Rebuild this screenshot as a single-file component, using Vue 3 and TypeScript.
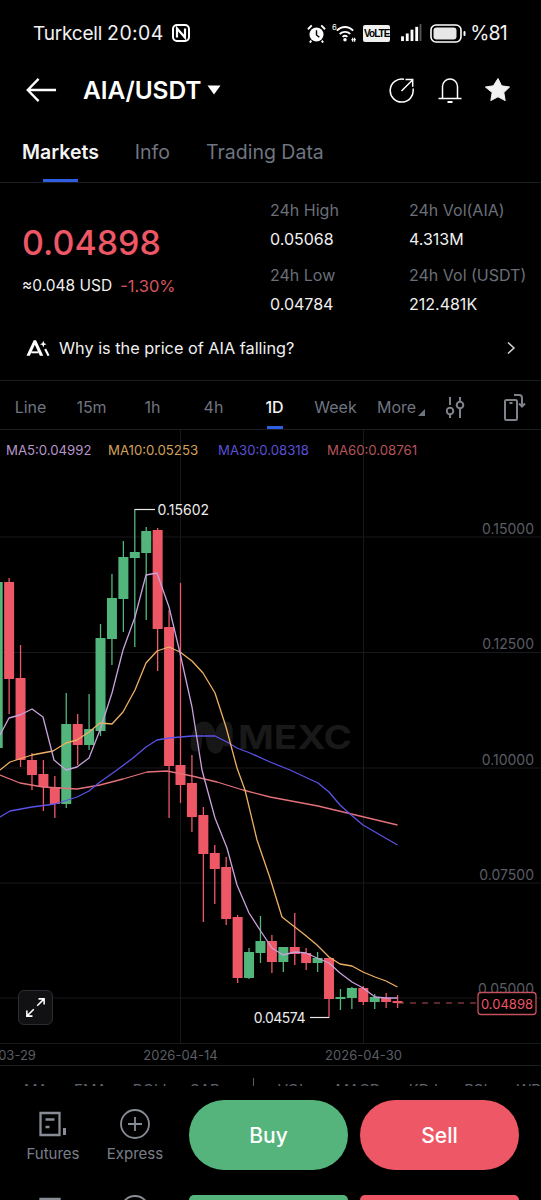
<script setup lang="ts">
// [index, colour, wick top, body top, body bottom, wick bottom]
type Candle = [number, 'g' | 'r', number, number, number, number]

const raw: Candle[] = [
  [0, 'g', 578, 582, 748, 760],
  [1, 'r', 578, 582, 679, 714],
  [2, 'r', 645, 678, 760, 767],
  [3, 'r', 753, 760, 775, 790],
  [4, 'r', 760, 774, 787, 811],
  [5, 'r', 776, 787, 804, 818],
  [6, 'g', 693, 724, 804, 808],
  [7, 'r', 714, 724, 745, 765],
  [8, 'g', 694, 729, 745, 750],
  [9, 'g', 624, 638, 731, 736],
  [10, 'g', 574, 598, 639, 665],
  [11, 'g', 541, 557, 599, 632],
  [12, 'g', 509, 552, 558, 647],
  [13, 'g', 527, 531, 553, 620],
  [14, 'r', 528, 530, 629, 671],
  [15, 'r', 610, 627, 766, 818],
  [16, 'r', 583, 765, 785, 803],
  [17, 'r', 755, 783, 817, 832],
  [18, 'r', 807, 815, 854, 922],
  [19, 'r', 845, 853, 869, 904],
  [20, 'r', 857, 867, 919, 925],
  [21, 'r', 915, 917, 978, 983],
  [22, 'g', 948, 952, 978, 979],
  [23, 'g', 916, 941, 953, 963],
  [24, 'r', 935, 941, 962, 973],
  [25, 'g', 947, 947, 962, 972],
  [26, 'r', 913, 947, 954, 965],
  [27, 'r', 948, 953, 963, 970],
  [28, 'g', 952, 958, 963, 972],
  [29, 'r', 958, 958, 999, 1018],
  [30, 'g', 989, 997, 999, 1010],
  [31, 'g', 987, 988, 998, 1009],
  [32, 'r', 986, 988, 1002, 1005],
  [33, 'g', 994, 997, 1002, 1009],
  [34, 'r', 993, 998, 1002, 1008],
  [35, 'r', 995, 1001, 1003, 1008]
]

const candles = raw.map(([i, c, wt, bt, bb, wb]) => ({
  x: -2.3 + i * 11.425,
  color: c === 'g' ? '#52b67c' : '#ee5766',
  wt,
  bt,
  bb,
  wb
}))

const ma5 =
  '0,735 9,718 20,715 32,709 43,717 54,760 66,770 77,767 89,758 100,730 112,693 123,650 135,617 146,575 157,573 169,607 180,653 192,707 202,770 215,818 227,848 237,885 249,913 260,930 272,948 283,955 295,952 306,953 317,958 329,963 340,973 352,982 363,988 375,997 386,998 397.5,998'
const ma10 =
  '0,770 10,762 32,755 53,751 66,743 77,740 89,732 100,723 112,724 123,712 135,690 146,663 157,651 169,647 180,652 192,661 203,673 215,693 226,727 237,768 245,790 257,840 270,878 282,917 305,935 317,945 329,957 340,964 352,966 363,972 375,977 386,981 397.5,987'
const ma30 =
  '0,817 10,811 32,807 55,804 77,797 89,791 100,782 117,770 133,758 146,747 157,740 169,738 192,736 215,736 227,742 237,748 250,753 270,762 290,770 318,783 329,792 340,805 350,814 363,825 397.5,845'
const ma60 =
  '0,775 20,783 43,787 77,789 100,785 123,779 147,772 167,771 192,776 217,782 243,790 270,797 318,806 397.5,825'

const lines = [
  { pts: ma60, color: '#e4717a' },
  { pts: ma30, color: '#5b52e6' },
  { pts: ma10, color: '#eeb063' },
  { pts: ma5, color: '#c8a2dc' }
]

const gridY = [537, 652.5, 768, 883, 998]
const yLabels = [
  { y: 529, t: '0.15000' },
  { y: 644, t: '0.12500' },
  { y: 760, t: '0.10000' },
  { y: 875, t: '0.07500' },
  { y: 989, t: '0.05000' }
]
const dates = [
  { x: -2, t: '2026-03-29' },
  { x: 180.5, t: '2026-04-14' },
  { x: 363.5, t: '2026-04-30' }
]

const tabs = ['Markets', 'Info', 'Trading Data']
const periods = ['Line', '15m', '1h', '4h', '1D', 'Week', 'More']
const legend = [
  { t: 'MA5:0.04992', c: '#b795c9', w: 102 },
  { t: 'MA10:0.05253', c: '#d5a05a', w: 110 },
  { t: 'MA30:0.08318', c: '#5a50d8', w: 109 },
  { t: 'MA60:0.08761', c: '#b5545a', w: 100 }
]
const stats = [
  { label: '24h High', value: '0.05068' },
  { label: '24h Vol(AIA)', value: '4.313M' },
  { label: '24h Low', value: '0.04784' },
  { label: '24h Vol (USDT)', value: '212.481K' }
]
const indicators = ['MA', 'EMA', 'BOLL', 'SAR', 'VOL', 'MACD', 'KDJ', 'RSI', 'WR']
</script>

<template>
  <div class="page">
    <div class="status">
      <div class="status-left">
        <span class="carrier">Turkcell</span>
        <span class="clock">20:04</span>
        <svg class="nfc" viewBox="0 0 18 18" fill="none" stroke="#fff">
          <rect x="1" y="1" width="16" height="16" rx="4" stroke-width="2" />
          <path d="M5 13.5V4.5l8 9V4.5" stroke-width="2.2" />
        </svg>
      </div>
      <div class="status-right">
        <svg class="alarm" viewBox="0 0 20 20">
          <circle cx="10" cy="11" r="7.4" fill="#fff" />
          <path d="M10 6.5V11.5L13 14" fill="none" stroke="#000" stroke-width="1.5" />
          <path d="M1 5.5 5 1.5M19 5.5 15 1.5M4.5 17.5 3 19.5M15.5 17.5 17 19.5" stroke="#fff" stroke-width="2" />
        </svg>
        <svg class="wifi" viewBox="0 0 26 20" fill="none" stroke="#fff" stroke-width="1.9">
          <text x="0" y="7" font-size="8" fill="#fff" stroke="none" font-family="Inter, sans-serif">6</text>
          <path d="M5 7.5c5-5 12-5 17 0M8 11c3.200-3 8-3 11 0M11 14c1.500-1.300 3.500-1.300 5 0" />
          <circle cx="13.500" cy="17" r="1.800" fill="#fff" stroke="none" />
          <path d="M20 17h5M21.500 15v4M23.500 15v4" stroke-width="1.200" />
        </svg>
        <span class="volte">VoLTE</span>
        <svg class="signal" viewBox="0 0 22 19">
          <rect x="0" y="13" width="3" height="5" fill="#fff" />
          <rect x="5" y="10" width="3" height="8" fill="#fff" />
          <rect x="10" y="6" width="3" height="12" fill="#fff" />
          <rect x="15" y="3" width="3" height="15" fill="#fff" />
          <rect x="19.500" y="0" width="2" height="18" fill="#555" />
        </svg>
        <svg class="battery" viewBox="0 0 36 19" fill="none">
          <rect x="1" y="1" width="30" height="17" rx="5" stroke="#fff" stroke-width="1.600" />
          <rect x="3.500" y="3.500" width="23" height="12" rx="3" fill="#e8e8e8" />
          <rect x="33.500" y="7" width="2" height="5" rx="1" fill="#fff" />
        </svg>
        <span class="percent">%81</span>
      </div>
    </div>

    <div class="nav">
      <svg class="back" viewBox="0 0 32 26" fill="none" stroke="#fff" stroke-width="2.400">
        <path d="M31 13H2M13 1.500 1.800 13 13 24.500" />
      </svg>
      <span class="pair">AIA/USDT</span>
      <svg class="caret" viewBox="0 0 14 10"><path d="M0.500 0.500h13L7 9.500z" fill="#fff" /></svg>
      <div class="nav-actions">
        <svg class="nav-icon" viewBox="0 0 26 26" fill="none" stroke="#fff" stroke-width="1.500">
          <path d="M15 2.300A11.500 11.500 0 1 0 24 11.500" />
          <path d="M12.500 14 23.500 3M16.500 2.500h7.200v7.200" />
        </svg>
        <svg class="nav-icon" viewBox="0 0 26 26" fill="none" stroke="#fff" stroke-width="1.500">
          <path d="M5.500 21V9.500a7.500 7.500 0 0 1 15 0V21M1.500 21.500h23" />
          <path d="M10.500 25h5" stroke-width="2" />
        </svg>
        <svg class="nav-icon" viewBox="0 0 26 26">
          <path
            d="M13 1.500l3.600 7.300 8 1.200-5.800 5.600 1.400 8-7.200-3.800-7.200 3.800 1.400-8L.4 10l8-1.200z"
            fill="#f2f2f2"
            stroke="#f2f2f2"
            stroke-linejoin="round"
          />
        </svg>
      </div>
    </div>

    <div class="tabs">
      <div v-for="(tab, i) in tabs" :key="tab" class="tab" :class="{ active: i === 0 }">{{ tab }}</div>
    </div>

    <div class="summary">
      <div class="price-block">
        <div class="price">0.04898</div>
        <div class="usd">
          <span>≈0.048 USD</span>
          <span class="change">-1.30%</span>
        </div>
      </div>
      <div class="stats">
        <div v-for="s in stats" :key="s.label" class="stat">
          <span class="stat-label">{{ s.label }}</span>
          <span class="stat-value">{{ s.value }}</span>
        </div>
      </div>
    </div>

    <div class="ai-row">
      <svg class="ai-icon" viewBox="0 0 25 18">
        <path d="M0.500 17 8 1h2.500L18 17h-3.500L9.200 5.500 4 17z" fill="#fff" />
        <path d="M5.500 13.500h7.500" stroke="#fff" stroke-width="2" />
        <path d="M18 1.500l1 2.500 2.500 1-2.500 1-1 2.500-1-2.500-2.500-1 2.500-1z" fill="#fff" />
        <path d="M20 10l3.500 7" stroke="#fff" stroke-width="2.200" />
      </svg>
      <span class="ai-text">Why is the price of AIA falling?</span>
      <svg class="chevron" viewBox="0 0 10 14" fill="none" stroke="#d8d8d8" stroke-width="1.500">
        <path d="M2 1.500 8 7l-6 5.500" />
      </svg>
    </div>

    <div class="periods">
      <div class="period-list">
        <div v-for="p in periods" :key="p" class="period" :class="{ active: p === '1D', more: p === 'More' }">
          {{ p }}
        </div>
      </div>
      <svg class="sliders" viewBox="0 0 20 26" fill="none" stroke="#7d828b" stroke-width="2">
        <path d="M4 3v8M4 20.500V24M14 3v5M14 14.500V24" />
        <circle cx="4" cy="17" r="3.300" />
        <circle cx="14" cy="11" r="3.300" />
      </svg>
      <svg class="rotate" viewBox="0 0 24 28" fill="none" stroke="#7d828b" stroke-width="2">
        <rect x="3" y="7" width="12" height="20" rx="1.500" />
        <path d="M7.500 10h3" />
        <path d="M12 2h5c2 0 3 1 3 3v8M17 10.500l3 3 3-3" />
      </svg>
    </div>

    <div class="chart">
      <svg class="chart-svg" viewBox="0 430 541 636" width="541" height="636">
        <line v-for="y in gridY" :key="y" x1="0" x2="541" :y1="y" :y2="y" stroke="#18191c" />
        <line x1="0" x2="541" y1="1043.500" y2="1043.500" stroke="#18191c" />
        <line x1="180.500" x2="180.500" y1="430" y2="1043" stroke="#18191c" />
        <line x1="363.500" x2="363.500" y1="430" y2="1043" stroke="#18191c" />

        <path
          d="M196 746c0-10 3-19 8-19s7 8 8 15 5 9 7 0 2-15 7-15c2 0 1 10 1 14"
          fill="none"
          stroke="#171717"
          stroke-width="11"
          stroke-linecap="round"
        />
        <text x="238" y="749" class="watermark" textLength="114" lengthAdjust="spacingAndGlyphs">MEXC</text>

        <g v-for="c in candles" :key="c.x">
          <line :x1="c.x" :x2="c.x" :y1="c.wt" :y2="c.wb" :stroke="c.color" stroke-width="1.300" />
          <rect :x="c.x - 5" :y="c.bt" width="10" :height="c.bb - c.bt" :fill="c.color" />
        </g>

        <polyline
          v-for="l in lines"
          :key="l.color"
          :points="l.pts"
          fill="none"
          :stroke="l.color"
          stroke-width="1.300"
          stroke-linejoin="round"
        />

        <text v-for="l in yLabels" :key="l.t" x="534" :y="l.y + 5" class="axis" text-anchor="end">{{ l.t }}</text>
        <text v-for="d in dates" :key="d.t" :x="d.x" y="1060" class="axis date" text-anchor="middle">{{ d.t }}</text>

        <path d="M134.700 509.500H155" stroke="#e8e8e8" stroke-width="1.200" fill="none" />
        <text x="157.500" y="515" class="mark">0.15602</text>
        <path d="M329 1017.500H310" stroke="#e8e8e8" stroke-width="1.200" fill="none" />
        <text x="305" y="1023" class="mark low" text-anchor="end">0.04574</text>

        <line x1="398" x2="478" y1="1003" y2="1003" stroke="#b34e5a" stroke-width="1.200" stroke-dasharray="6 6" />
        <rect x="478" y="992.500" width="58" height="22" rx="3" fill="#000" stroke="#c4505e" stroke-width="1.300" />
        <text x="507" y="1008.500" class="last" text-anchor="middle">0.04898</text>
      </svg>

      <div class="legend">
        <span v-for="m in legend" :key="m.t" :style="{ color: m.c, width: m.w + 'px' }">{{ m.t }}</span>
      </div>

      <div class="expand">
        <svg viewBox="0 0 22 22" fill="none" stroke="#fff" stroke-width="1.800">
          <path d="M13 9l8-8M14.500 1H21v6.500M9 13l-8 8M7.500 21H1v-6.500" />
        </svg>
      </div>
    </div>

    <div class="indicators">
      <span v-for="n in indicators" :key="n" class="indicator" :class="'ind-' + n">{{ n }}</span>
    </div>

    <div v-for="row in 2" :key="row" class="actions" :class="{ peek: row === 2 }">
      <div class="action">
        <svg class="action-icon" viewBox="0 0 30 30" fill="none" stroke="#888c94" stroke-width="2.300">
          <path d="M2.500 4h19v22h-19z" />
          <path d="M7.500 10.500h9M7.500 18h4" />
          <path d="M26.500 19v7" stroke-width="3" />
        </svg>
        <span>Futures</span>
      </div>
      <div class="action">
        <svg class="action-icon" viewBox="0 0 30 30" fill="none" stroke="#888c94" stroke-width="1.800">
          <circle cx="15" cy="15" r="14" />
          <path d="M15 8v14M8 15h14" />
        </svg>
        <span>Express</span>
      </div>
      <button class="btn buy">Buy</button>
      <button class="btn sell">Sell</button>
    </div>
  </div>
</template>

<style>
html,
body {
  background: #000;
}
</style>

<style scoped>
.page {
  width: 541px;
  height: 1200px;
  overflow: hidden;
  background: #000;
  color: #fff;
  font-family: Inter, 'Liberation Sans', sans-serif;
  display: flex;
  flex-direction: column;
}

.status {
  height: 66px;
  flex: none;
  display: flex;
  align-items: center;
  justify-content: space-between;
  padding: 0 34px 0 33px;
  color: #f2f2f2;
}

.status-left {
  display: flex;
  align-items: center;
}

.carrier {
  font-size: 19px;
  letter-spacing: -0.2px;
}

.clock {
  font-size: 19.500px;
  margin-left: 5px;
  letter-spacing: 0.4px;
}

.nfc {
  width: 18px;
  height: 18px;
  margin-left: 8px;
}

.status-right {
  display: flex;
  align-items: center;
}

.alarm {
  width: 19px;
  height: 19px;
  margin-right: -3px;
  transform: translateX(-3px);
}

.wifi {
  width: 25px;
  height: 20px;
  margin-left: 6px;
}

.volte {
  width: 27px;
  height: 17px;
  margin-left: 6px;
  background: #f0f0f0;
  color: #000;
  border-radius: 2px;
  font-family: 'Liberation Sans', sans-serif;
  font-weight: 700;
  font-size: 10px;
  letter-spacing: -0.9px;
  line-height: 17px;
  text-align: center;
}

.signal {
  width: 21px;
  height: 18px;
  margin-left: 11px;
}

.battery {
  width: 36px;
  height: 19px;
  margin-left: 8px;
}

.percent {
  font-size: 19.500px;
  letter-spacing: -0.8px;
  margin-left: 4px;
}

.nav {
  height: 48px;
  flex: none;
  display: flex;
  align-items: center;
  padding-left: 26px;
}

.back {
  width: 31px;
  height: 26px;
}

.pair {
  margin-left: 26px;
  font-size: 24.500px;
  font-weight: 600;
  letter-spacing: -0.1px;
}

.caret {
  width: 14px;
  height: 10px;
  margin-left: 6px;
}

.nav-actions {
  margin-left: auto;
  padding-right: 30px;
  display: flex;
  gap: 22px;
}

.nav-icon {
  width: 26px;
  height: 26px;
}

.tabs {
  height: 69px;
  flex: none;
  display: flex;
  gap: 36px;
  padding-left: 22px;
  border-bottom: 1px solid #1c1d21;
  box-sizing: border-box;
}

.tab {
  position: relative;
  padding-top: 26px;
  font-size: 19.500px;
  line-height: 24px;
  color: #6f7580;
}

.tab.active {
  color: #f4f4f4;
  font-weight: 600;
}

.tab.active::after {
  content: '';
  position: absolute;
  left: 21px;
  width: 35px;
  bottom: 0;
  height: 3px;
  background: #2f5fe0;
}

.summary {
  height: 147px;
  flex: none;
  display: flex;
  justify-content: space-between;
  box-sizing: border-box;
}

.price-block {
  padding: 40px 0 0 22px;
}

.price {
  font-size: 34px;
  line-height: 40px;
  font-weight: 500;
  color: #ee5766;
}

.usd {
  margin-top: 13px;
  display: flex;
  gap: 8px;
  font-size: 15.500px;
  line-height: 20px;
  color: #f0f0f0;
}

.change {
  color: #d9535f;
  font-size: 16.500px;
}

.stats {
  width: 271px;
  padding-top: 17px;
  display: grid;
  grid-template-columns: 139px 132px;
  grid-auto-rows: max-content;
  row-gap: 16px;
}

.stat {
  display: flex;
  flex-direction: column;
  gap: 9px;
  font-size: 16px;
  line-height: 20px;
  white-space: nowrap;
}

.stat-label {
  color: #6a6f78;
}

.stat-value {
  color: #f0f0f0;
}

.ai-row {
  height: 51px;
  flex: none;
  box-sizing: border-box;
  display: flex;
  align-items: center;
  padding: 0 25px 14px 26px;
  border-bottom: 1px solid #1c1d21;
}

.ai-icon {
  width: 24px;
  height: 18px;
}

.ai-text {
  margin-left: 9px;
  font-size: 16.300px;
  color: #f0f0f0;
}

.chevron {
  width: 10px;
  height: 14px;
  margin-left: auto;
}

.periods {
  height: 49px;
  flex: none;
  box-sizing: border-box;
  display: flex;
  border-bottom: 1px solid #1c1d21;
  align-items: center;
  padding-top: 4px;
}

.period-list {
  display: grid;
  grid-template-columns: repeat(7, 61px);
  height: 100%;
}

.period {
  position: relative;
  display: flex;
  align-items: center;
  justify-content: center;
  font-size: 16px;
  color: #6f7580;
}

.period.active {
  color: #f4f4f4;
  font-weight: 500;
}

.period.active::after {
  content: '';
  position: absolute;
  left: 23px;
  width: 16px;
  bottom: 0;
  height: 3px;
  background: #2f5fe0;
}

.period.more::after {
  content: '';
  position: absolute;
  right: 2px;
  bottom: 13px;
  width: 0;
  height: 0;
  border-left: 7px solid transparent;
  border-bottom: 7px solid #6f7580;
}

.sliders {
  width: 20px;
  height: 26px;
  flex: none;
  margin-left: 19px;
}

.rotate {
  width: 24px;
  height: 28px;
  flex: none;
  margin-left: 36px;
}

.chart {
  position: relative;
  height: 636px;
  flex: none;
  box-sizing: border-box;
  border-bottom: 1px solid #1c1d21;
  overflow: hidden;
}

.chart-svg {
  position: absolute;
  left: 0;
  top: 0;
  display: block;
}

.axis {
  font-size: 14px;
  fill: #5a5d64;
}

.date {
  font-size: 13px;
}

.mark {
  font-size: 14px;
  fill: #ececec;
}

.low {
  letter-spacing: -0.5px;
}

.last {
  font-size: 13px;
  fill: #ee5766;
}

.watermark {
  font-size: 33px;
  font-weight: 700;
  fill: #191919;
}

.legend {
  position: absolute;
  left: 6px;
  top: 11px;
  display: flex;
  font-size: 13.200px;
  line-height: 18px;
  white-space: nowrap;
}

.expand {
  position: absolute;
  left: 18px;
  top: 560px;
  width: 35px;
  height: 35px;
  box-sizing: border-box;
  border: 1px solid #2b2d33;
  border-radius: 6px;
  background: #111114;
  display: flex;
  align-items: center;
  justify-content: center;
}

.expand svg {
  width: 19px;
  height: 19px;
}

.indicators {
  height: 20px;
  flex: none;
  overflow: hidden;
  display: flex;
  padding: 15px 0 0 24px;
  box-sizing: border-box;
  font-size: 15px;
  line-height: 18px;
  color: #5f646e;
  white-space: nowrap;
}

.indicator {
  flex: none;
}

.ind-EMA {
  margin-left: 26px;
}

.ind-BOLL {
  margin-left: 26px;
}

.ind-SAR {
  margin-left: 19px;
}

.ind-VOL {
  margin-left: 58px;
  position: relative;
}

.ind-VOL::before {
  content: '';
  position: absolute;
  left: -25px;
  top: -3px;
  width: 1px;
  height: 12px;
  background: #5a5d64;
}

.ind-MACD {
  margin-left: 28px;
}

.ind-KDJ {
  margin-left: 28px;
}

.ind-RSI {
  margin-left: 26px;
}

.ind-WR {
  margin-left: 29px;
}

.actions {
  height: 109px;
  flex: none;
  box-sizing: border-box;
  padding: 14px 22px 0 12px;
  display: flex;
  align-items: flex-start;
}

.action {
  width: 82px;
  padding-top: 9px;
  display: flex;
  flex-direction: column;
  align-items: center;
  gap: 5px;
  font-size: 15px;
  line-height: 20px;
  color: #7a7f88;
}

.action-icon {
  width: 30px;
  height: 30px;
}

.btn {
  width: 159px;
  height: 70px;
  border: none;
  border-radius: 35px;
  color: #fff;
  font-family: inherit;
  font-size: 21px;
  font-weight: 500;
  padding: 0;
}

.buy {
  margin-left: 13px;
  background: #55b47b;
}

.sell {
  margin-left: 12px;
  background: #ee5766;
}

.peek {
  padding-top: 0;
}

.peek .action {
  padding-top: 0;
}

.peek .btn {
  border-radius: 5px;
}
</style>
